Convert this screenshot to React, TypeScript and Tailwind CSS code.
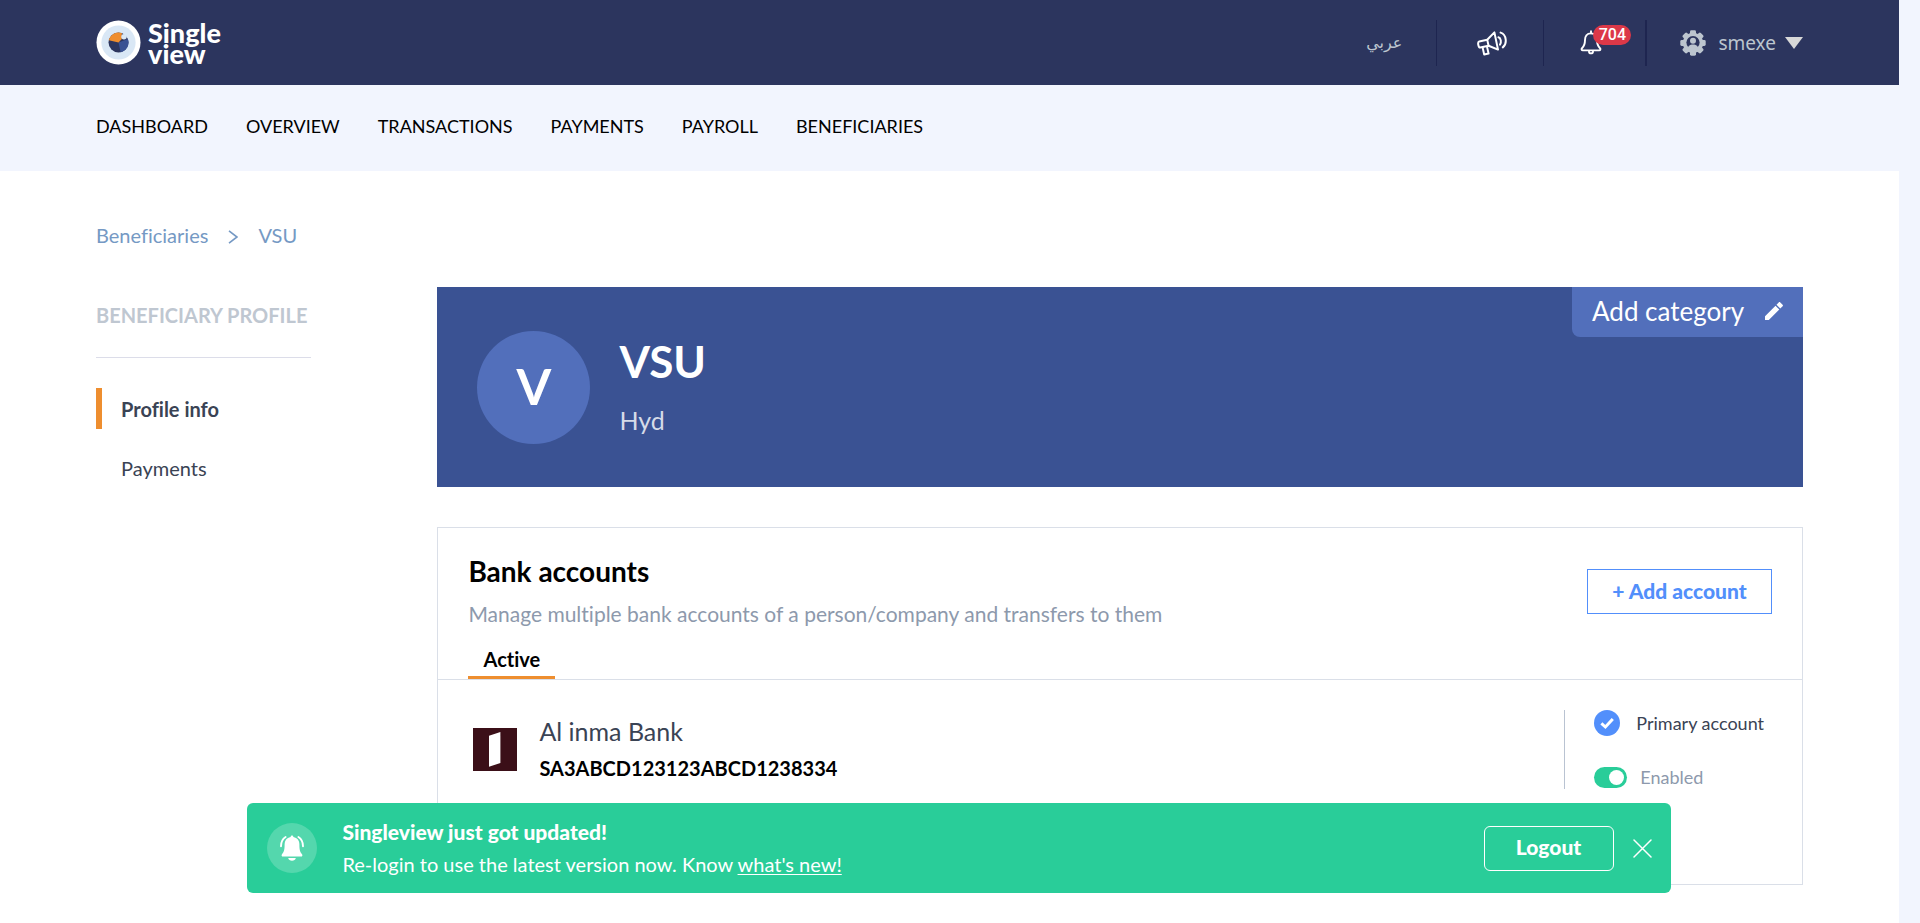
import { useState } from "react";

const navItems = ["DASHBOARD", "OVERVIEW", "TRANSACTIONS", "PAYMENTS", "PAYROLL", "BENEFICIARIES"];

function Logo() {
  return (
    <a href="#home" aria-label="Single view" className="flex items-center gap-[7px] text-white">
      <svg viewBox="0 0 46 46" className="size-[45px]" aria-hidden="true">
        <circle cx="23" cy="23" r="22.5" fill="#fff" />
        <circle cx="23" cy="23" r="17.5" fill="#d9e7f5" />
        <circle cx="23" cy="23" r="10.2" fill="#2c355e" />
        <path d="M23 23 L32.6 19.4 A10.2 10.2 0 0 1 25.2 33 Z" fill="#3a5293" />
        <path d="M23 23 L13.1 20.6 A10.2 10.2 0 0 1 26.4 13.4 L26.4 19.5 Z" fill="#ef8d2e" />
        <circle cx="28.6" cy="17.2" r="2.8" fill="#d9e7f5" />
      </svg>
      <span className="font-[Lato] text-[27px] leading-[21px] font-black">
        Single
        <br />
        view
      </span>
    </a>
  );
}

function MegaphoneIcon() {
  return (
    <svg viewBox="0 0 31 25" className="h-[25px] w-[31px]" fill="none" stroke="#fff" strokeWidth="2" strokeLinecap="round" strokeLinejoin="round" aria-hidden="true">
      <path d="M3.2 10.4 L11.2 8.8 L18.4 1.4 L22 18.6 L12.6 14.8 L4.2 16.6 C2.4 16.8 1.2 11 3.2 10.4 Z" />
      <path d="M11.2 8.8 L12.6 14.8" />
      <path d="M6.6 16.4 L8.2 23.6 L12.6 22.6 L11 15.6" />
      <path d="M22.4 6.2 C25 7 25.6 11.4 24 13.6" />
      <path d="M24.6 1.6 C30.6 3.4 31.4 12.8 26.8 16.4" />
    </svg>
  );
}

function BellIcon() {
  return (
    <svg viewBox="0 0 22 25" className="h-[25px] w-[22px]" fill="none" stroke="#fff" strokeWidth="1.9" strokeLinecap="round" strokeLinejoin="round" aria-hidden="true">
      <path d="M11 1.2 V3.2" />
      <path d="M11 3.4 C6.8 3.4 5 6.4 5 10 C5 14.6 4.2 16.2 2 18.2 C1.2 19 1.6 20.4 2.8 20.4 H19.2 C20.4 20.4 20.8 19 20 18.2 C17.8 16.2 17 14.6 17 10 C17 6.4 15.2 3.4 11 3.4 Z" />
      <path d="M9 21.6 C9.2 24 12.8 24 13 21.6" />
    </svg>
  );
}

function GearUserIcon() {
  return (
    <svg viewBox="0 0 26 26" className="size-[26px]" fill="#bcc5cf" aria-hidden="true">
      <rect x="10" y="0.3" width="6" height="25.4" rx="1.4" />
      <rect x="10" y="0.3" width="6" height="25.4" rx="1.4" transform="rotate(45 13 13)" />
      <rect x="10" y="0.3" width="6" height="25.4" rx="1.4" transform="rotate(90 13 13)" />
      <rect x="10" y="0.3" width="6" height="25.4" rx="1.4" transform="rotate(135 13 13)" />
      <circle cx="13" cy="13" r="10.2" />
      <circle cx="13" cy="12.6" r="6.6" fill="#2c355e" />
      <circle cx="13" cy="10.8" r="3" />
      <path d="M7.6 20 C7.6 16 9.8 14.6 13 14.6 C16.2 14.6 18.4 16 18.4 20 Z" />
    </svg>
  );
}

function AlertBellIcon() {
  return (
    <svg viewBox="0 0 26 28" className="h-[28px] w-[26px]" aria-hidden="true">
      <path d="M13 1.5 C13.8 1.5 14.4 2.1 14.4 3 C18.4 3.8 20.4 6.6 20.4 10.6 C20.4 16 21 18 23 20.2 C23.8 21.2 23.4 22.6 22 22.6 H4 C2.6 22.6 2.2 21.2 3 20.2 C5 18 5.6 16 5.6 10.6 C5.6 6.6 7.6 3.8 11.6 3 C11.6 2.1 12.2 1.5 13 1.5 Z" fill="#fff" />
      <path d="M9.2 24 H16.8 C16.4 25.8 15 26.8 13 26.8 C11 26.8 9.6 25.8 9.2 24 Z" fill="#fff" />
      <path d="M6.6 3 C3.4 5 2 8 2 12.2 M19.4 3 C22.6 5 24 8 24 12.2" fill="none" stroke="#fff" strokeWidth="1.9" strokeLinecap="round" />
    </svg>
  );
}

function Header() {
  return (
    <header className="flex h-[85px] items-center justify-between bg-[#2c355e] px-24">
      <Logo />
      <div className="flex items-center">
        <a href="#ar" lang="ar" className="pr-[34px] font-['DejaVu_Sans',sans-serif] text-[16px] leading-6 text-[#bcc5cf]">عربي</a>
        <span className="h-[46px] w-px bg-[#1e2550]" />
        <button type="button" aria-label="Announcements" className="pt-0.5 pr-9 pl-[39px]"><MegaphoneIcon /></button>
        <span className="h-[46px] w-px bg-[#1e2550]" />
        <button type="button" aria-label="Notifications" className="relative pr-[43px] pl-9">
          <BellIcon />
          <span className="absolute top-[-5px] left-[49px] flex h-5 w-[38px] items-center justify-center rounded-full bg-[#dc3848] font-[Roboto] text-[16px] font-medium text-white">704</span>
        </button>
        <span className="h-[46px] w-0.5 bg-[#1e2550]" />
        <button type="button" className="flex items-center pl-[33px] text-[#bcc5cf]">
          <GearUserIcon />
          <span className="mr-[9px] ml-3 font-['Noto_Sans'] text-[19px] leading-6">smexe</span>
          <svg viewBox="0 0 18 12" className="h-3 w-[18px]" aria-hidden="true"><path d="M0 0H18L9 12Z" fill="#d8d8d8" /></svg>
        </button>
      </div>
    </header>
  );
}

function Sidebar() {
  return (
    <aside className="w-1/5 shrink-0 pt-4 text-[#3a4354]">
      <h2 className="w-[215px] border-b border-[#dcdde9] pb-[30px] text-[20px] leading-6 font-bold whitespace-nowrap text-[#bfc7d1]">BENEFICIARY PROFILE</h2>
      <nav className="mt-[30px] flex flex-col gap-[18px] text-[20px] leading-6">
        <a href="#info" className="flex h-[41px] items-center border-l-[6px] border-[#ee8e2f] pl-[19px] font-bold">Profile info</a>
        <a href="#payments" className="flex h-[41px] items-center border-l-[6px] border-transparent pl-[19px]">Payments</a>
      </nav>
    </aside>
  );
}

function ProfileBanner() {
  return (
    <section className="flex h-[200px] items-start justify-between bg-[#3a5293] text-white">
      <div className="flex gap-[29px] pt-11 pl-10">
        <div className="flex size-[113px] items-center justify-center rounded-full bg-[#526fbb] pb-1 text-[50px] leading-[60px] font-bold">V</div>
        <div className="pt-[3px]">
          <h1 className="text-[44px] leading-[54px] font-bold">VSU</h1>
          <p className="mt-4 text-[25px] leading-8 text-[#d5dbe8]">Hyd</p>
        </div>
      </div>
      <button type="button" className="flex h-[50px] w-[231px] items-center justify-between rounded-bl-lg bg-[#526fbb] px-5 pb-0.5 text-[26px] leading-8">
        Add category
        <svg viewBox="0 0 18 18" className="size-[18px]" fill="#fff" aria-hidden="true">
          <path d="M0 14.2 V18 H3.8 L14.3 7.5 L10.5 3.7 Z M17.6 4.3 C18.1 3.8 18.1 3.2 17.6 2.7 L15.3 .4 C14.8 -.1 14.2 -.1 13.7 .4 L11.5 2.7 L15.3 6.5 Z" />
        </svg>
      </button>
    </section>
  );
}

function AccountsCard() {
  const [enabled, setEnabled] = useState(true);
  return (
    <section className="mt-10 border border-[#dadfe8]">
      <div className="flex h-[152px] justify-between border-b border-[#dadfe8] px-[30px]">
        <div className="flex flex-col justify-between">
          <div className="pt-[27px]">
            <h2 className="text-[28px] leading-8 font-bold text-black">Bank accounts</h2>
            <p className="mt-[15px] text-[21px] leading-6 text-[#8d99ac]">Manage multiple bank accounts of a person/company and transfers to them</p>
          </div>
          <button type="button" className="w-[87px] border-b-[3px] border-[#ee8e2f] pb-[5px] text-[20px] leading-6 font-bold text-black">Active</button>
        </div>
        <button type="button" className="mt-[41px] flex h-[45px] w-[185px] items-center justify-center border border-[#528ffb] pb-0.5 text-[21px] font-black text-[#528ffb]">+ Add account</button>
      </div>
      <div className="flex h-[204px] items-start justify-between pt-[30px] pr-[38px] pl-[35px]">
        <div className="flex gap-[22px] pt-[5px]">
          <svg viewBox="0 0 44 43" className="mt-[13px] h-[43px] w-[44px]" role="img" aria-label="Al inma Bank logo">
            <rect width="44" height="43" fill="#3b0f18" />
            <path d="M16 7.8 L27.4 4 V35 L16 38.8 Z" fill="#fff" />
          </svg>
          <div>
            <h3 className="text-[25px] leading-8 text-[#3a4354]">Al inma Bank</h3>
            <p className="mt-[9px] text-[20px] leading-6 font-bold text-black">SA3ABCD123123ABCD1238334</p>
          </div>
        </div>
        <div className="flex h-[79px] flex-col justify-between border-l border-[#b9c3d2] pl-[29px] text-[18px] leading-6">
          <div className="flex h-[26px] items-center gap-4 text-[#3a4354]">
            <svg viewBox="0 0 26 26" className="size-[26px]" aria-hidden="true">
              <circle cx="13" cy="13" r="13" fill="#528ffb" />
              <path d="M7.4 13.4 L11.4 17 L18.8 9" fill="none" stroke="#fff" strokeWidth="3" />
            </svg>
            Primary account
          </div>
          <label className="flex items-center gap-[13px] text-[#8d99ac]">
            <input
              type="checkbox"
              checked={enabled}
              onChange={() => setEnabled(!enabled)}
              className="relative h-[21px] w-[33px] appearance-none rounded-full bg-[#b9c3d2] before:absolute before:top-[3px] before:left-[3px] before:size-[15px] before:rounded-full before:bg-white checked:bg-[#29cd99] checked:before:left-[15px]"
            />
            Enabled
          </label>
        </div>
      </div>
    </section>
  );
}

function UpdateToast() {
  const [open, setOpen] = useState(true);
  if (!open) return null;
  return (
    <div className="fixed inset-x-0 bottom-[30px] flex justify-center pr-0.5">
      <div role="status" className="flex h-[90px] w-[74.2%] items-center justify-between rounded-md bg-[#29cd99] pr-[19px] pl-5 text-[20px] text-white">
        <div className="flex items-center gap-[25px]">
          <span className="flex size-[50px] items-center justify-center rounded-full bg-[#54d7ad]"><AlertBellIcon /></span>
          <div className="leading-8">
            <p className="text-[21px] font-black">Singleview just got updated!</p>
            <p>Re-login to use the latest version now. Know <a href="#new" className="underline decoration-1 underline-offset-2">what's new!</a></p>
          </div>
        </div>
        <div className="flex items-center gap-[19px]">
          <button type="button" className="h-[45px] w-[130px] rounded-md border border-white pb-0.5 text-[21px] font-black">Logout</button>
          <button type="button" aria-label="Close" onClick={() => setOpen(false)}>
            <svg viewBox="0 0 19 19" className="size-[19px]" fill="none" stroke="#fff" strokeWidth="1.5" strokeLinecap="round" aria-hidden="true"><path d="M1 1L18 18M18 1L1 18" /></svg>
          </button>
        </div>
      </div>
    </div>
  );
}

export default function App() {
  return (
    <div className="min-h-screen bg-[#f2f5fe] pr-[21px] font-[Lato,sans-serif] [font-variant-ligatures:no-common-ligatures]">
      <div className="min-h-screen bg-white">
        <Header />
        <nav className="flex h-[86px] items-center gap-[38px] bg-[#f2f5fe] px-24 pb-[3px] text-[18px] text-black">
          {navItems.map((item) => (
            <a key={item} href={"#" + item.toLowerCase()}>{item}</a>
          ))}
        </nav>
        <main className="px-24 pt-[52px]">
          <nav aria-label="Breadcrumb" className="flex items-center gap-5 text-[20px] leading-6 text-[#7599c4]">
            <a href="#beneficiaries">Beneficiaries</a>
            <svg viewBox="0 0 10 14" className="mt-1 h-3.5 w-2.5" fill="none" stroke="currentColor" strokeWidth="1.6" aria-hidden="true"><path d="M1 .8L9 7L1 13.2" /></svg>
            <span>VSU</span>
          </nav>
          <div className="mt-10 flex">
            <Sidebar />
            <div className="min-w-0 flex-1">
              <ProfileBanner />
              <AccountsCard />
            </div>
          </div>
        </main>
      </div>
      <UpdateToast />
    </div>
  );
}
